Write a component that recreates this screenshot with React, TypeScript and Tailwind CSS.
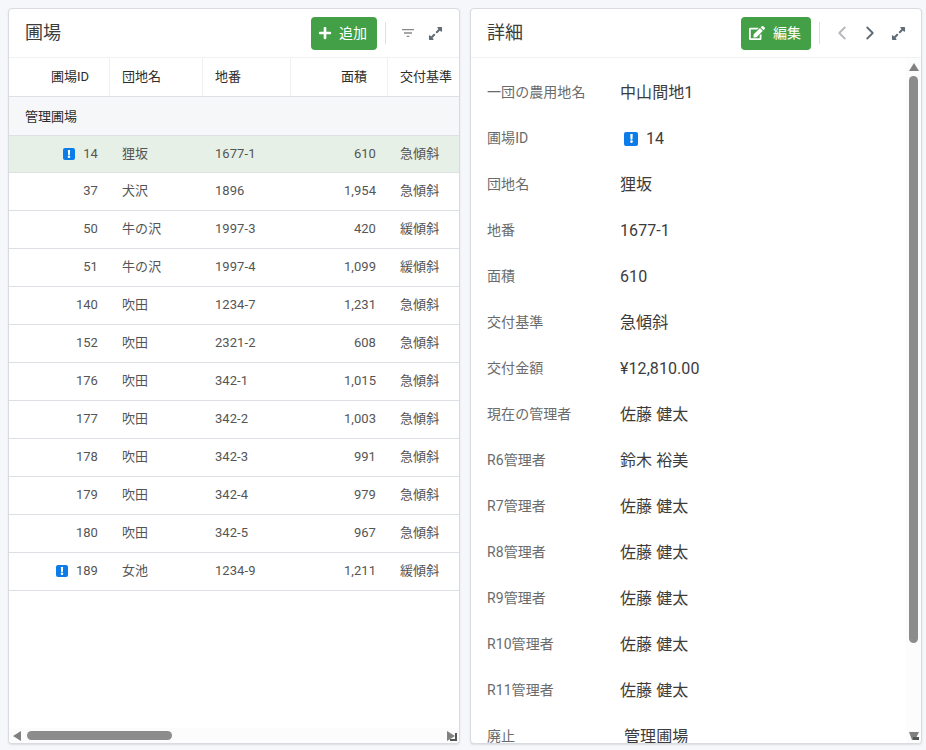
import { FaEdit, FaExclamation, FaExpandAlt, FaPlus } from "react-icons/fa";
import { MdFilterList } from "react-icons/md";
import { FiChevronLeft, FiChevronRight } from "react-icons/fi";

const fields: [number, string, string, string, string][] = [
  [37, "犬沢", "1896", "1,954", "急傾斜"],
  [50, "牛の沢", "1997-3", "420", "緩傾斜"],
  [51, "牛の沢", "1997-4", "1,099", "緩傾斜"],
  [140, "吹田", "1234-7", "1,231", "急傾斜"],
  [152, "吹田", "2321-2", "608", "急傾斜"],
  [176, "吹田", "342-1", "1,015", "急傾斜"],
  [177, "吹田", "342-2", "1,003", "急傾斜"],
  [178, "吹田", "342-3", "991", "急傾斜"],
  [179, "吹田", "342-4", "979", "急傾斜"],
  [180, "吹田", "342-5", "967", "急傾斜"],
];

const details: [string, string][] = [
  ["団地名", "狸坂"],
  ["地番", "1677-1"],
  ["面積", "610"],
  ["交付基準", "急傾斜"],
  ["交付金額", "¥12,810.00"],
  ["現在の管理者", "佐藤 健太"],
  ["R6管理者", "鈴木 裕美"],
  ["R7管理者", "佐藤 健太"],
  ["R8管理者", "佐藤 健太"],
  ["R9管理者", "佐藤 健太"],
  ["R10管理者", "佐藤 健太"],
  ["R11管理者", "佐藤 健太"],
];

const gridCols = "grid grid-cols-[101px_93px_88px_97px_100px]";

const Alert = ({ size = "small" }: { size?: "small" | "large" }) => (
  <span
    className={
      size === "small"
        ? "flex h-3 w-3 items-center justify-center rounded-[2px] bg-[#0b7ce8] text-[8px] text-white"
        : "flex h-[14px] w-[14px] items-center justify-center rounded-[2px] bg-[#0b7ce8] text-[9px] text-white"
    }
  >
    <FaExclamation />
  </span>
);

const TableRow = ({
  id,
  name,
  lot,
  area,
  grade,
  alert,
  selected,
}: {
  id: number;
  name: string;
  lot: string;
  area: string;
  grade: string;
  alert?: boolean;
  selected?: boolean;
}) => (
  <div
    className={
      selected
        ? `${gridCols} h-[37px] items-center border-b border-[#dcdfe3] bg-[#e6f0e6] text-[13px] tracking-[0.005em] text-[#555]`
        : `${gridCols} h-[38px] items-center border-b border-[#dcdfe3] pb-px text-[13px] tracking-[0.005em] text-[#555]`
    }
  >
    <div className="flex items-center justify-end gap-2 pr-3">
      {alert && <Alert />}
      <span>{id}</span>
    </div>
    <div className="pl-3">{name}</div>
    <div className="pl-3">{lot}</div>
    <div className="pr-3 text-right">{area}</div>
    <div className="whitespace-nowrap pl-3">{grade}</div>
  </div>
);

const DetailRow = ({ label, children }: { label: string; children: React.ReactNode }) => (
  <div className="flex h-[46px] shrink-0 items-center">
    <div className="w-[133px] text-sm tracking-[0.005em] text-[#6b6b6b]">{label}</div>
    <div className="flex items-center pt-px text-base tracking-[0.005em] text-[#3c3c3c]">{children}</div>
  </div>
);

const Divider = () => <div className="mx-2 h-[22px] w-px bg-[#dcdfe3]" />;

export default function App() {
  return (
    <div className="flex h-[750px] w-[926px] gap-[10px] overflow-hidden bg-[#f5f7fa] py-2 pl-2 pr-1 font-['Roboto','Noto_Sans_CJK_JP',sans-serif]">
      {/* 圃場 list */}
      <section className="flex h-[736px] w-[452px] flex-col overflow-hidden rounded-[4px] border border-[#d8dbe0] bg-white shadow-[0_1px_2px_rgba(0,0,0,0.1)]">
        <header className="flex h-[49px] shrink-0 items-center border-b border-[#eff1f3] pl-4 pr-4">
          <h2 className="text-lg text-[#3c3c3c]">圃場</h2>
          <button className="ml-auto flex h-[33px] w-[66px] items-center gap-[7px] rounded-[4px] bg-[#43a047] pl-[7px] text-sm text-white">
            <FaPlus className="text-[14px]" />
            追加
          </button>
          <Divider />
          <MdFilterList className="ml-[6px] text-[16px] text-[#8a8a8a]" />
          <FaExpandAlt className="ml-3 text-[15px] text-[#5f6b75]" />
        </header>

        <div className="min-h-0 flex-1 overflow-hidden">
          <div className={`${gridCols} h-[39px] items-center border-b border-[#dcdfe3] text-[13px] text-[#2c2c2c]`}>
            <div className="flex h-full items-center justify-end border-r border-[#eff1f3] pr-5">圃場ID</div>
            <div className="flex h-full items-center border-r border-[#eff1f3] pl-3">団地名</div>
            <div className="flex h-full items-center border-r border-[#eff1f3] pl-3">地番</div>
            <div className="flex h-full items-center justify-end border-r border-[#eff1f3] pr-5">面積</div>
            <div className="whitespace-nowrap pl-3">交付基準</div>
          </div>
          <div className="flex h-[39px] items-center border-b border-[#dcdfe3] bg-[#f6f7f9] pl-4 pt-px text-[13px] text-[#2c2c2c]">
            管理圃場
          </div>
          <TableRow id={14} name="狸坂" lot="1677-1" area="610" grade="急傾斜" alert selected />
          {fields.map(([id, name, lot, area, grade]) => (
            <TableRow key={id} id={id} name={name} lot={lot} area={area} grade={grade} />
          ))}
          <TableRow id={189} name="女池" lot="1234-9" area="1,211" grade="緩傾斜" alert />
        </div>

        <div className="flex h-[15px] shrink-0 items-center bg-[#fcfcfc] pl-1 pr-[2px]">
          <svg width="8" height="10" viewBox="0 0 8 10" className="fill-[#808080]">
            <path d="M8 0v10L0 5z" />
          </svg>
          <div className="ml-[6px] h-[9px] w-[145px] rounded-full bg-[#8c8c8c]" />
          <svg width="10" height="10" viewBox="0 0 10 10" className="ml-auto">
            <path d="M0 0l8 5-8 5z" fill="#808080" />
            <path d="M8 2h2v8H3V8h5z" fill="#555" />
          </svg>
        </div>
      </section>

      {/* 詳細 */}
      <section className="flex h-[736px] w-[452px] flex-col overflow-hidden rounded-[4px] border border-[#d8dbe0] bg-white shadow-[0_1px_2px_rgba(0,0,0,0.1)]">
        <header className="flex h-[49px] shrink-0 items-center border-b border-[#eff1f3] pl-4 pr-[15px]">
          <h2 className="text-lg text-[#3c3c3c]">詳細</h2>
          <button className="ml-auto flex h-[33px] w-[70px] items-center gap-2 rounded-[4px] bg-[#43a047] pl-2 text-sm text-white">
            <FaEdit className="text-[16px]" />
            編集
          </button>
          <Divider />
          <FiChevronLeft className="ml-[3px] text-[22px] text-[#b4b8bc]" />
          <FiChevronRight className="ml-[6px] text-[22px] text-[#5f6b75]" />
          <FaExpandAlt className="ml-[10px] text-[15px] text-[#5f6b75]" />
        </header>

        <div className="flex min-h-0 flex-1">
          <div className="flex min-w-0 flex-1 flex-col overflow-hidden pl-4 pt-[11px]">
            <DetailRow label="一団の農用地名">中山間地1</DetailRow>
            <DetailRow label="圃場ID">
              <span className="ml-1 mr-2">
                <Alert size="large" />
              </span>
              14
            </DetailRow>
            {details.map(([label, value]) => (
              <DetailRow key={label} label={label}>
                {value}
              </DetailRow>
            ))}
            <DetailRow label="廃止">
              <span className="ml-1">管理圃場</span>
            </DetailRow>
          </div>

          <div className="flex w-[15px] shrink-0 flex-col items-center bg-[#fcfcfc] pt-[5px]">
            <svg width="10" height="8" viewBox="0 0 10 8" className="fill-[#808080]">
              <path d="M5 0l5 8H0z" />
            </svg>
            <div className="mt-[5px] h-[567px] w-[9px] rounded-full bg-[#8c8c8c]" />
            <svg width="10" height="8" viewBox="0 0 10 8" className="mt-auto mb-[3px]">
              <path d="M0 0h10L6 8H3z" fill="#808080" />
              <path d="M4 5h6v3H4z" fill="#555" />
            </svg>
          </div>
        </div>
      </section>
    </div>
  );
}
